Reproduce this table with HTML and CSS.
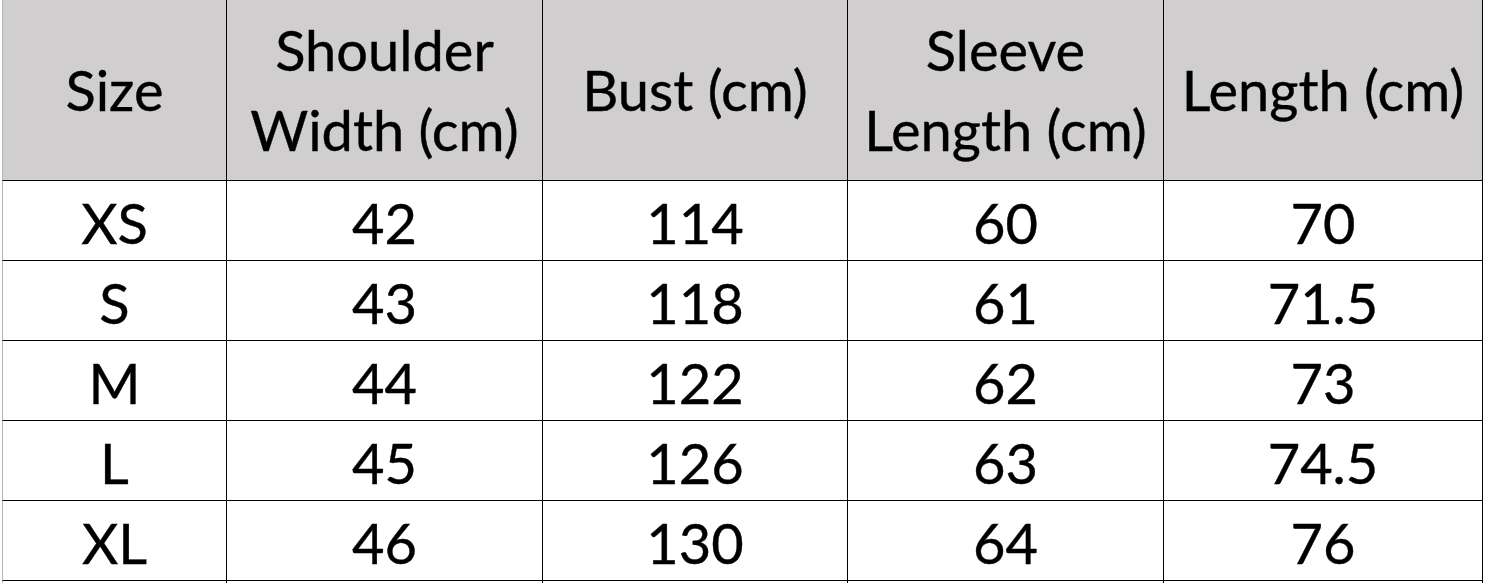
FILE: index.html
```html
<!DOCTYPE html>
<html>
<head>
<meta charset="utf-8">
<link rel="stylesheet" href="styles.css">
</head>
<body>
<table class="size-table">
  <thead>
    <tr>
      <th class="c1">Size</th>
      <th class="c2">Shoulder<br>Width (cm)</th>
      <th class="c3">Bust (cm)</th>
      <th class="c4">Sleeve<br>Length (cm)</th>
      <th class="c5">Length (cm)</th>
    </tr>
  </thead>
  <tbody>
    <tr><td class="c1">XS</td><td>42</td><td>114</td><td>60</td><td>70</td></tr>
    <tr><td class="c1">S</td><td>43</td><td>118</td><td>61</td><td>71.5</td></tr>
    <tr><td class="c1">M</td><td>44</td><td>122</td><td>62</td><td>73</td></tr>
    <tr><td class="c1">L</td><td>45</td><td>126</td><td>63</td><td>74.5</td></tr>
    <tr><td class="c1">XL</td><td>46</td><td>130</td><td>64</td><td>76</td></tr>
    <tr class="spill"><td class="c1"></td><td></td><td></td><td></td><td></td></tr>
  </tbody>
</table>
</body>
</html>
```
FILE: styles.css
```css
html, body {
  margin: 0;
  background: #ffffff;
}
body {
  padding-left: 2px;
  overflow: hidden;
  height: 583px;
}
.size-table {
  border-collapse: separate;
  border-spacing: 0;
  table-layout: fixed;
  font-family: "Lato", "Open Sans", sans-serif;
  color: #000;
}
.size-table th,
.size-table td {
  padding: 0;
  text-align: center;
  vertical-align: middle;
  border-right: 1px solid #000;
  border-bottom: 1px solid #000;
  font-weight: normal;
  -webkit-text-stroke: 0.4px #000;
}
.size-table th {
  background: #d0cece;
  height: 180px;
  font-size: 56px;
  line-height: 80px;
}
.size-table td {
  height: 75px;
  padding-top: 4px;
  font-size: 56px;
  line-height: 75px;
}
.size-table .spill td {
  height: 20px;
  padding: 0;
  line-height: 20px;
}
.size-table .c1 { border-left: 1px solid #b4b4b4; width: 223px; }
.size-table .c2 { width: 315px; }
.size-table .c3 { width: 304px; }
.size-table .c4 { width: 315px; }
.size-table .c5 { width: 318px; }
```
